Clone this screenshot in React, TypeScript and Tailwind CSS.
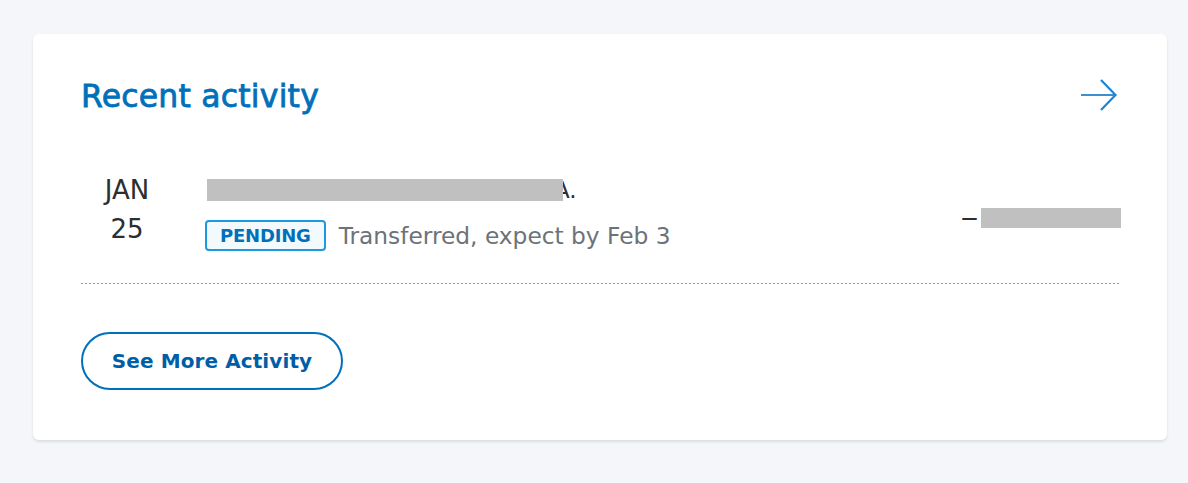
import React from "react";

export default function App() {
  return (
    <div className="min-h-screen w-full bg-[#f5f6fa] pt-[34px]" style={{ fontFamily: '"DejaVu Sans", Verdana, sans-serif' }}>
      <div className="ml-[33px] w-[1134px] rounded-[6px] bg-white px-[48px] pt-[42px] pb-[50px] shadow-[0_2px_3px_rgba(0,0,0,0.1)]">
        <div className="flex items-center justify-between">
          <h2 className="text-[31.5px] leading-[40px] tracking-[0.2px] text-[#0070ba] [-webkit-text-stroke:0.8px_#0070ba]">Recent activity</h2>
          <svg width="40" height="34" viewBox="0 0 40 34" className="mr-[-1px]">
            <line x1="1" y1="16" x2="35" y2="16" stroke="#3d8fce" strokeWidth="2.2" />
            <polyline points="21,1 35.5,16 21,31" fill="none" stroke="#1a86d8" strokeWidth="2.2" />
          </svg>
        </div>

        <div className="mt-[54px] flex items-start">
          <div className="w-[92px] text-center text-[26px] leading-[39px] text-[#2c2e2f]">
            <div className="mt-[1px]">JAN</div>
            <div>25</div>
          </div>
          <div className="ml-[32px] flex flex-col">
            <div className="mt-[9px] flex h-[22px] items-center">
              <div className="relative z-10 ml-[2px] h-[22px] w-[356px] bg-[#c0c0c0]" />
              <span className="ml-[-9px] text-[23px] leading-[22px] text-[#2c2e2f]">A.</span>
            </div>
            <div className="mt-[19px] flex items-center">
              <span className="flex h-[31px] items-center rounded-[4px] border-2 border-[#1a9ae0] bg-[#f3fafe] px-[13px] text-[18px] font-bold tracking-[-0.2px] text-[#0070ba]">PENDING</span>
              <span className="ml-[13px] text-[23.3px] leading-[31px] text-[#6c7378]">Transferred, expect by Feb 3</span>
            </div>
          </div>
          <div className="ml-auto mr-[-2px] mt-[38px] flex h-[20px] items-center">
            <span className="text-[23px] leading-[20px] text-[#2c2e2f]">−</span>
            <div className="ml-[2px] h-[20px] w-[140px] bg-[#c0c0c0]" />
          </div>
        </div>

        <div className="mt-[32px] h-px w-full bg-[linear-gradient(to_right,#9a9a9a_50%,transparent_0)] bg-[length:4px_1px]" />

        <div className="mt-[48px]">
          <button className="flex h-[58px] w-[262px] items-center justify-center rounded-full border-2 border-[#0070ba] bg-white text-[20px] font-bold tracking-[0.1px] text-[#005ea6]">
            See More Activity
          </button>
        </div>
      </div>
    </div>
  );
}
